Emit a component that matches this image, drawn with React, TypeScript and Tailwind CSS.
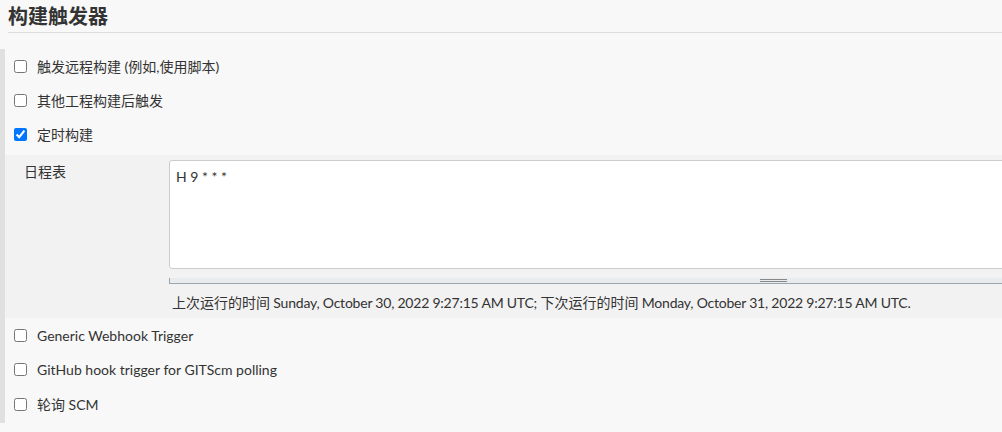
import React from "react";

const font = { fontFamily: '"Lato", "Noto Sans CJK SC", sans-serif' };

function Row({ label, checked, h }: { label: string; checked?: boolean; h?: string }) {
  return (
    <div className={`flex items-center pl-[9px] ${h ?? "h-[34px]"}`}>
      <input
        type="checkbox"
        defaultChecked={checked}
        className="m-0 h-[13px] w-[13px] shrink-0"
      />
      <span className="ml-[10px] text-[14px] text-[#333]">{label}</span>
    </div>
  );
}

export default function App() {
  return (
    <div
      className="h-[432px] w-full overflow-hidden bg-[#f8f8f8] text-[#333]"
      style={font}
    >
      <div className="ml-2 h-[33px] border-b border-[#dddddd] pt-[4px]">
        <h2 className="text-[20px] font-bold leading-[24px] text-[#333]">构建触发器</h2>
      </div>
      <div className="mt-[16px] h-[374px] border-l-[5px] border-[#e0e0e0]">
        <Row label="触发远程构建 (例如,使用脚本)" />
        <Row label="其他工程构建后触发" />
        <Row label="定时构建" checked />
        <div className="mt-[4px] flex h-[163px] overflow-hidden bg-[#f2f2f2] pt-[5px]">
          <div className="w-[164px] shrink-0 pl-[19px] pt-[2px] text-[14px] leading-[20px]">
            日程表
          </div>
          <div className="flex shrink-0 flex-col">
            <div className="h-[109px] w-[1208px] rounded-[3px] border border-[#cccccc] bg-white px-[6px] pt-[7px] text-[14px] leading-[18px] text-[#333]">
              H 9 * * *
            </div>
            <div className="mt-[9px] flex h-[6px] w-[1208px] items-start justify-center border-b border-l border-[#9aa5ad] bg-[#e8ecef]">
              <div className="mt-[1px] h-[3px] w-[27px] border-y border-[#888888]" />
            </div>
            <div className="pl-[3px] pt-[9px] text-[14px] leading-[20px] whitespace-nowrap">
              上次运行的时间
              <span className="tracking-[-0.22px]"> Sunday, October 30, 2022 9:27:15 AM UTC; </span>
              下次运行的时间
              <span className="tracking-[-0.22px]"> Monday, October 31, 2022 9:27:15 AM UTC.</span>
            </div>
          </div>
        </div>
        <Row label="Generic Webhook Trigger" h="h-[34px]" />
        <Row label="GitHub hook trigger for GITScm polling" h="h-[35px]" />
        <Row label="轮询 SCM" h="h-[35px]" />
      </div>
    </div>
  );
}
